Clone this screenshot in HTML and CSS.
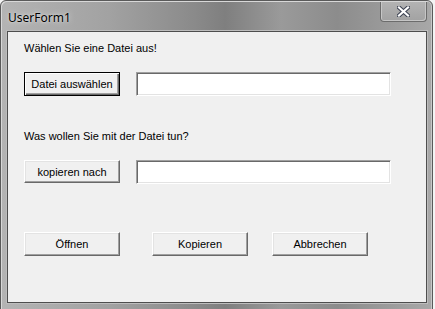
FILE: index.html
```html
<!DOCTYPE html>
<html lang="de">
<head>
    <meta charset="UTF-8">
    <title>UserForm1</title>
    <link rel="stylesheet" href="styles.css">
</head>
<body>
    <div class="window">
        <div class="titlebar">
            <span class="title">UserForm1</span>
            <button class="close" aria-label="Schließen">
                <svg width="13" height="11" viewBox="0 0 13 11">
                    <path d="M2 1.5 L11 9.5 M11 1.5 L2 9.5" stroke="#3c4252" stroke-width="4.2" stroke-linecap="square"/>
                    <path d="M2 1.5 L11 9.5 M11 1.5 L2 9.5" stroke="#ffffff" stroke-width="2.2" stroke-linecap="square"/>
                </svg>
            </button>
        </div>
        <div class="client">
            <p class="label">Wählen Sie eine Datei aus!</p>
            <div class="row">
                <button class="btn default">Datei auswählen</button>
                <input class="textbox" type="text">
            </div>

            <p class="label second">Was wollen Sie mit der Datei tun?</p>
            <div class="row">
                <button class="btn">kopieren nach</button>
                <input class="textbox" type="text">
            </div>

            <div class="actions">
                <button class="btn">Öffnen</button>
                <button class="btn">Kopieren</button>
                <button class="btn">Abbrechen</button>
            </div>
        </div>
    </div>
</body>
</html>
```

FILE: styles.css
```css
body {
    margin: 0;
    background: #f4f4f4;
    font-family: Tahoma, "Liberation Sans", Arial, sans-serif;
    font-size: 11px;
    color: #000;
    overflow: hidden;
}
.window {
    width: 431px;
    height: 308px;
    border: 1px solid #5a5a5a;
    border-radius: 6px 6px 0 0;
    background: linear-gradient(90deg, #b4b4b4 0%, #a2a2a2 25%, #8a8a8a 45%, #7f7f7f 52%, #9a9a9a 65%, #8c8c8c 78%, #a8a8a8 100%);
    box-shadow: inset 1px 1px 0 #d8d8d8, inset -1px 0 0 #c8c8c8;
}
.titlebar {
    height: 30px;
    display: flex;
    align-items: flex-start;
    justify-content: space-between;
}
.title {
    font-family: "Noto Sans", "Liberation Sans", sans-serif;
    font-size: 12px;
    margin: 8px 0 0 7px;
    text-shadow: 0 0 6px rgba(255,255,255,0.7), 0 0 2px rgba(255,255,255,0.6);
}
.close {
    width: 47px;
    height: 20px;
    margin: 1px 5px 0 0;
    padding: 0;
    border: 1px solid #6c6c6c;
    border-top: none;
    border-radius: 0 0 4px 4px;
    background: linear-gradient(#b3b3b3, #a2a2a2);
    box-shadow: inset 1px 0 0 #c6c6c6, inset -1px -1px 0 #c6c6c6;
    display: flex;
    align-items: center;
    justify-content: center;
}
.client {
    margin: 0 5px 0 6px;
    height: 270px;
    border: 1px solid #4e4e4e;
    background: #f0f0f0;
    padding: 0 16px;
    box-shadow: 0 0 0 1px #bdbdbd;
}
.label {
    margin: 9px 0 0;
    line-height: 14px;
    height: 14px;
    padding-left: 0;
}
.label.second {
    margin-top: 33px;
}
.row {
    display: flex;
    align-items: flex-start;
    gap: 16px;
    margin-top: 17px;
}
.btn {
    width: 96px;
    height: 24px;
    padding: 0;
    font: inherit;
    color: #000;
    background: #f0f0f0;
    border: 1px solid;
    border-color: #fff #696969 #696969 #fff;
    box-shadow: inset -1px -1px 0 #a0a0a0, inset 1px 1px 0 #e3e3e3;
}
.btn.default {
    border: 1px solid #000;
    box-shadow: inset 1px 1px 0 #fff, inset -1px -1px 0 #696969, inset -2px -2px 0 #a0a0a0;
}
.row .btn:not(.default) {
    height: 23px;
}
.textbox {
    box-sizing: border-box;
    width: 255px;
    height: 24px;
    margin: 0;
    padding: 0;
    background: #fff;
    border: 1px solid;
    border-color: #a0a0a0 #fff #fff #a0a0a0;
    box-shadow: inset 1px 1px 0 #696969, inset -1px -1px 0 #e3e3e3;
    outline: none;
}
.actions {
    display: flex;
    margin-top: 48px;
}
.actions .btn + .btn {
    margin-left: 32px;
}
.actions .btn:last-child {
    margin-left: 24px;
}
```
